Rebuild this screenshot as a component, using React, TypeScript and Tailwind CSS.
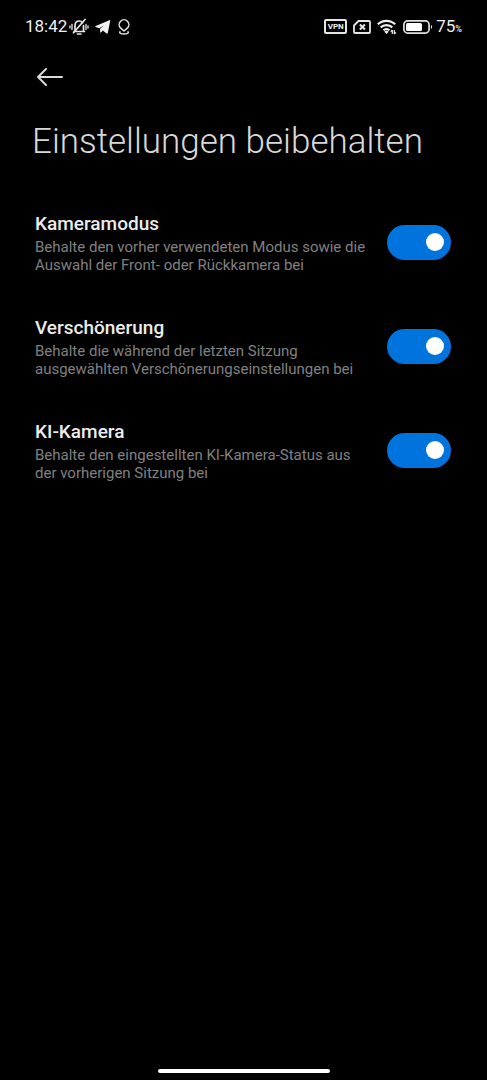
import { useState } from 'react';

interface Setting {
  id: string;
  title: string;
  description: string;
}

const settings: Setting[] = [
  {
    id: 'kameramodus',
    title: 'Kameramodus',
    description: 'Behalte den vorher verwendeten Modus sowie die Auswahl der Front- oder Rückkamera bei',
  },
  {
    id: 'verschoenerung',
    title: 'Verschönerung',
    description: 'Behalte die während der letzten Sitzung ausgewählten Verschönerungseinstellungen bei',
  },
  {
    id: 'ki-kamera',
    title: 'KI-Kamera',
    description: 'Behalte den eingestellten KI-Kamera-Status aus der vorherigen Sitzung bei',
  },
];

function MutedBellIcon() {
  return (
    <svg width="20" height="18" viewBox="0 0 20 18" fill="none" stroke="#e8e8e8" strokeWidth="1.7" strokeLinecap="round" aria-hidden="true">
      <path d="M5 13.5h10.5M6 13V8c0-3 1.700-5 4.200-5 1.500 0 2.600.6 3.300 1.700M14.500 7.500V13M8.500 16h3.400" />
      <path d="M4.500 14.800 16 1.500" />
      <path d="M3 6.500v5M1 8v2M17 6.500v5M19 8v2" strokeWidth="1.300" />
    </svg>
  );
}

function TelegramIcon() {
  return (
    <svg width="16" height="14" viewBox="0 0 16 14" fill="#f2f2f2" aria-hidden="true">
      <path d="M15.300.6 12.800 13c-.1.600-.7.700-1.200.4L7.800 10.600 6 12.400c-.4.400-.9.200-.9-.4V8.800L9 5.500 4.300 8.300.7 7c-.6-.2-.6-.8 0-1.100L14.300.2c.7-.2 1.100 0 1 .4Z" />
    </svg>
  );
}

function LocationIcon() {
  return (
    <svg width="12" height="16" viewBox="0 0 12 16" fill="none" stroke="#e4e4e4" strokeWidth="1.500" strokeLinecap="round" strokeLinejoin="round" aria-hidden="true">
      <path d="M6 12 2.500 8.900a4.800 4.800 0 1 1 7 0L6 12Z" />
      <path d="M2 12.800c-1 1.200 1 2.200 4 2.200s5-1 4-2.200" />
    </svg>
  );
}

function VpnIcon() {
  return (
    <span className="flex h-[15px] w-[23px] items-center justify-center rounded-[2px] border-2 border-[#e6e6e6] text-[8px] leading-[11px] font-bold">
      VPN
    </span>
  );
}

function NoSimIcon() {
  return (
    <svg width="18" height="14" viewBox="0 0 18 14" fill="none" stroke="#e6e6e6" strokeWidth="1.800" strokeLinejoin="round" aria-hidden="true">
      <path d="M5.500 1H16c.6 0 1 .4 1 1v10c0 .6-.4 1-1 1H2c-.6 0-1-.4-1-1V5.500L5.500 1Z" />
      <path d="m6.900 4.500 5 5M11.900 4.500l-5 5" strokeWidth="2" />
    </svg>
  );
}

function WifiIcon() {
  return (
    <svg width="20" height="16" viewBox="0 0 20 16" fill="none" stroke="#f0f0f0" strokeWidth="2.200" aria-hidden="true">
      <path d="M.8 5.300a12.500 12.500 0 0 1 17.400 0" />
      <path d="M3.700 8.400a8.300 8.300 0 0 1 11.600 0" />
      <path d="M6.500 11.300a4.300 4.300 0 0 1 6 0" />
      <path d="m9.500 15-2.200-2.200a3 3 0 0 1 4.400 0Z" fill="#f0f0f0" stroke="none" />
      <path d="M15.300 11v4M13.700 12.600l1.600-1.600M17.300 15v-4M18.900 13.400 17.300 15" strokeWidth="1.200" />
    </svg>
  );
}

function BatteryIcon() {
  return (
    <svg width="30" height="14" viewBox="0 0 30 14" aria-hidden="true">
      <rect x="0.900" y="0.900" width="25.200" height="12.200" rx="3.800" fill="none" stroke="#e2e2e2" strokeWidth="1.700" />
      <rect x="3" y="3" width="16" height="8" rx="1.500" fill="#fff" />
      <path d="M28 5c1.600.6 1.600 3.400 0 4Z" fill="#e2e2e2" />
    </svg>
  );
}

function StatusBar() {
  return (
    <div className="flex h-[52px] items-center justify-between px-[25px] pt-px text-[17px] text-[#efefef]">
      <div className="flex items-center">
        <span className="mr-[2px]">18:42</span>
        <MutedBellIcon />
        <span className="ml-[6px]"><TelegramIcon /></span>
        <span className="ml-[7px]"><LocationIcon /></span>
      </div>
      <div className="flex items-center">
        <VpnIcon />
        <span className="ml-[6px]"><NoSimIcon /></span>
        <span className="ml-[6px]"><WifiIcon /></span>
        <span className="ml-[6px]"><BatteryIcon /></span>
        <span className="ml-[3px]">
          75<span className="text-[9px] font-medium">%</span>
        </span>
      </div>
    </div>
  );
}

function SettingRow({ setting }: { setting: Setting }) {
  const [enabled, setEnabled] = useState(true);
  return (
    <li>
      <label htmlFor={setting.id} className="flex cursor-pointer items-center justify-between gap-4">
        <span className="min-w-0 flex-1">
          <span className="block text-[19px] leading-7 font-medium text-[#ececec]">{setting.title}</span>
          <span className="block text-[15px] leading-[18px] text-[#818181]">{setting.description}</span>
        </span>
        <input
          id={setting.id}
          type="checkbox"
          role="switch"
          checked={enabled}
          onChange={(event) => setEnabled(event.target.checked)}
          className="flex h-[35px] w-16 shrink-0 cursor-pointer appearance-none items-center rounded-full bg-[#3a3a3a] px-[7px] before:block before:size-[18px] before:rounded-full before:bg-white before:content-[''] checked:justify-end checked:bg-[#0073dd]"
        />
      </label>
    </li>
  );
}

export default function App() {
  return (
    <div className="flex min-h-screen flex-col bg-black font-[Roboto,sans-serif]">
      <StatusBar />
      <main className="flex-1 pr-9 pl-[35px]">
        <button type="button" aria-label="Zurück" className="flex h-[50px] w-[30px] items-center justify-center">
          <svg width="28" height="20" viewBox="0 0 28 20" fill="none" stroke="#dadada" strokeWidth="2" strokeLinecap="round" strokeLinejoin="round" aria-hidden="true">
            <path d="M26 10H2M10 2 2 10l8 8" />
          </svg>
        </button>
        <h1 className="-ml-[3px] text-[35px] leading-[80px] font-light whitespace-nowrap text-[#d8d8d8]">Einstellungen beibehalten</h1>
        <ul className="mt-7 flex flex-col gap-10">
          {settings.map((setting) => (
            <SettingRow key={setting.id} setting={setting} />
          ))}
        </ul>
      </main>
      <footer className="flex justify-center pb-[7px]">
        <div className="h-1 w-[172px] rounded-full bg-white" />
      </footer>
    </div>
  );
}
